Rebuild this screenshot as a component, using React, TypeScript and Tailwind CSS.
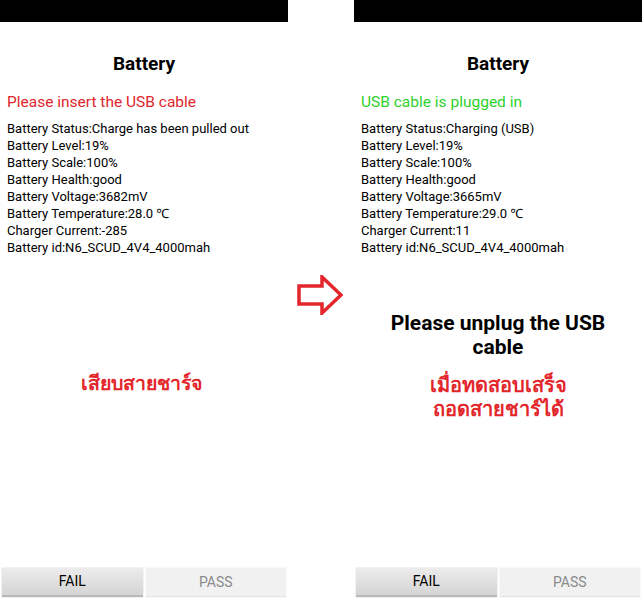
import React from 'react';

const font = { fontFamily: 'Roboto, "Noto Sans", "DejaVu Sans", sans-serif' };

interface PanelProps {
  status: string;
  statusColor: string;
  lines: string[];
  children: React.ReactNode;
}

const Buttons: React.FC = () => (
  <div className="flex gap-[3px] px-[2px] pb-[11px]">
    <div className="flex h-[29px] flex-1 items-center justify-center border-b-2 border-[#b9b9b9] bg-gradient-to-b from-[#ececec] to-[#d4d4d4] text-[14px] text-black shadow-[0_0_1px_rgba(0,0,0,0.3)]">
      FAIL
    </div>
    <div className="flex h-[29px] flex-1 items-center justify-center border-b border-[#e2e2e2] bg-[#f1f1f1] text-[14px] text-[#8a8a8a] shadow-[0_0_1px_rgba(0,0,0,0.15)]">
      PASS
    </div>
  </div>
);

const Panel: React.FC<PanelProps> = ({ status, statusColor, lines, children }) => (
  <div className="flex h-[608px] w-[288px] flex-col bg-white">
    <div className="h-[22px] bg-black" />
    <div className="mt-[30px] text-center text-[19px] font-bold leading-[24px] text-black">Battery</div>
    <div className={`mt-[16px] px-[7px] text-[15.5px] leading-[20px] ${statusColor}`}>{status}</div>
    <div className="mt-[8px] px-[7px] text-[13px] leading-[17px] text-black">
      {lines.map((l) => (
        <div key={l}>{l}</div>
      ))}
    </div>
    <div className="flex-1">{children}</div>
    <Buttons />
  </div>
);

const App: React.FC = () => {
  return (
    <div className="flex h-[608px] w-[642px] bg-white" style={font}>
      <Panel
        status="Please insert the USB cable"
        statusColor="text-[#e0262b]"
        lines={[
          'Battery Status:Charge has been pulled out',
          'Battery Level:19%',
          'Battery Scale:100%',
          'Battery Health:good',
          'Battery Voltage:3682mV',
          'Battery Temperature:28.0 ℃',
          'Charger Current:-285',
          'Battery id:N6_SCUD_4V4_4000mah',
        ]}
      >
        <div className="mt-[116px] pr-[6px] text-center text-[19.5px] font-bold leading-[24px] text-[#e3262b]">
          เสียบสายชาร์จ
        </div>
      </Panel>

      <div className="w-[66px]">
        <svg className="ml-[9px] mt-[275px]" width="46" height="40" viewBox="0 0 46 40">
          <polygon
            points="2,11 25,11 25,2 44,20 25,38 25,29 2,29"
            fill="white"
            stroke="#e3262b"
            strokeWidth="3.5"
            strokeLinejoin="miter"
          />
        </svg>
      </div>

      <Panel
        status="USB cable is plugged in"
        statusColor="text-[#2ed12e]"
        lines={[
          'Battery Status:Charging (USB)',
          'Battery Level:19%',
          'Battery Scale:100%',
          'Battery Health:good',
          'Battery Voltage:3665mV',
          'Battery Temperature:29.0 ℃',
          'Charger Current:11',
          'Battery id:N6_SCUD_4V4_4000mah',
        ]}
      >
        <div className="mt-[55px] px-[20px] text-center text-[21px] font-bold leading-[24px] text-black">
          Please unplug the USB cable
        </div>
        <div className="mt-[14px] text-center text-[20px] font-bold leading-[24px] text-[#e3262b]">
          เมื่อทดสอบเสร็จ
          <br />
          ถอดสายชาร์ได้
        </div>
      </Panel>
    </div>
  );
};

export default App;
